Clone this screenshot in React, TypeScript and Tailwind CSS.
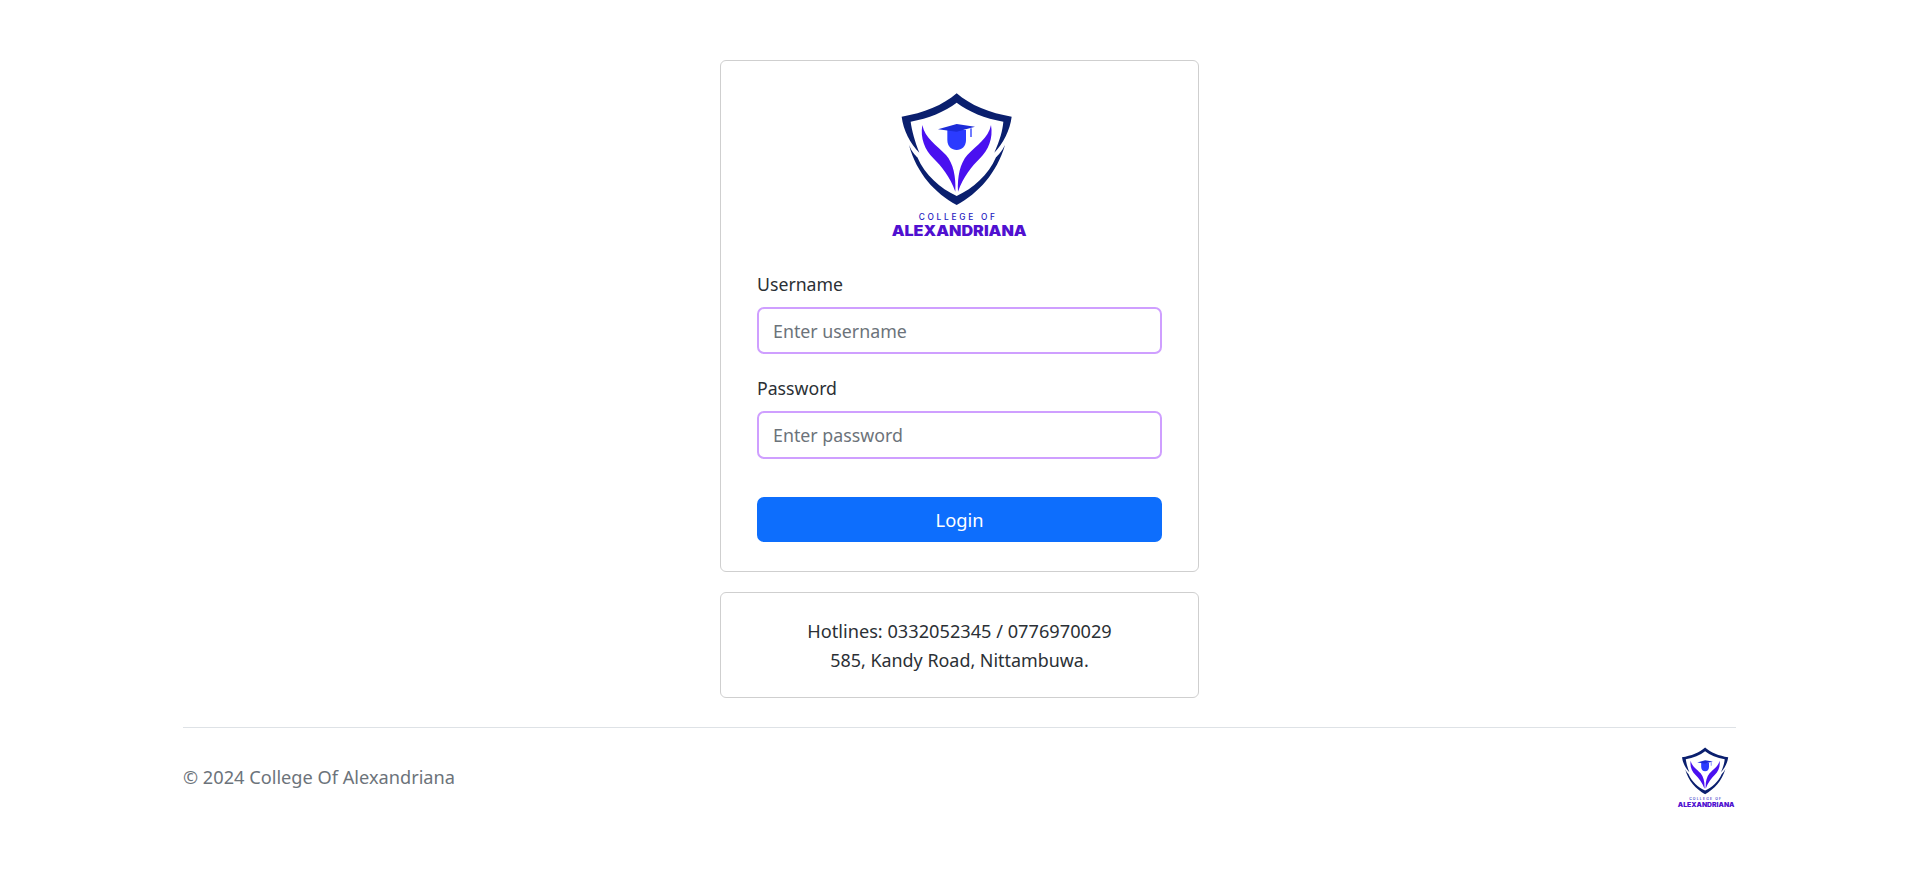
function Logo({ className }: { className: string }) {
  return (
    <svg viewBox="90 30 420 450" className={className}>
      {/* shield */}
      <path
        fill="#0a1f6e"
        d="M290 40C330 75 390 100 455 110C450 150 430 190 403 218C420 180 428 150 430 125C375 115 325 95 290 68C255 95 205 115 152 125C155 150 165 185 178 218C150 190 130 150 125 110C190 100 250 75 290 40Z"
      />
      <path
        fill="#0a1f6e"
        d="M147 195C170 280 225 340 290 375C355 340 410 280 435 195C425 215 415 225 408 232C385 285 340 325 290 348C240 325 195 285 172 232C165 225 155 215 147 195Z"
      />
      {/* wings */}
      <path
        fill="#4a10f0"
        d="M187 135C195 175 230 195 258 225C280 250 288 290 286 335C270 290 245 260 220 235C195 210 180 175 187 135Z"
      />
      <path
        fill="#4a10f0"
        d="M393 135C385 175 350 195 322 225C300 250 292 290 294 335C310 290 335 260 360 235C385 210 400 175 393 135Z"
      />
      {/* cap */}
      <path fill="#2b3bff" d="M262 150H318V180C318 200 305 210 290 210C275 210 262 200 262 180Z" />
      <path fill="#1c2bd8" d="M234 148L290 132L345 140L290 155Z" />
      <rect x="331" y="145" width="4" height="26" fill="#2b3bff" />
      <text
        x="176"
        y="419"
        fill="#2418c0"
        fontSize="25"
        fontWeight="500"
        textLength="229"
        fontFamily="Inter, sans-serif"
      >
        COLLEGE OF
      </text>
      <text
        x="95"
        y="468"
        fill="#5010d0"
        fontSize="42"
        fontWeight="900"
        textLength="405"
        lengthAdjust="spacingAndGlyphs"
        fontFamily="Inter, sans-serif"
      >
        ALEXANDRIANA
      </text>
    </svg>
  )
}

const fields = [
  { label: 'Username', placeholder: 'Enter username', type: 'text', height: 'h-[47px]' },
  { label: 'Password', placeholder: 'Enter password', type: 'password', height: 'h-[48px]' },
]

export default function App() {
  return (
    <div className="min-h-[871px] bg-white pl-[2px] font-['Noto_Sans',sans-serif] text-[18.2px] font-[380] text-[#2b3035]">
      <div className="flex flex-col items-center pt-[60px]">
        {/* Login card */}
        <div className="w-[479px] rounded-[6px] border border-[#cfcfcf] px-[36px] pt-[29px] pb-[29px]">
          <Logo className="mx-auto h-[150px] w-[140px]" />
          <form className="mt-[30px]">
            {fields.map(({ label, placeholder, type, height }) => (
              <div key={label} className="mb-[20px]">
                <label className="mb-[9px] block h-[28px] text-[17.7px] leading-[28px]">{label}</label>
                <input
                  type={type}
                  placeholder={placeholder}
                  className={`block ${height} w-full rounded-[7px] border-2 border-[#cf9fff] px-[14px] text-[17.8px] outline-none placeholder:text-[#6c737a]`}
                />
              </div>
            ))}
            <button
              type="button"
              className="mt-[38px] block h-[45px] w-full rounded-[7px] bg-[#0d6efd] text-[18.3px] text-white"
            >
              Login
            </button>
          </form>
        </div>

        {/* Contact card */}
        <div className="mt-[20px] w-[479px] rounded-[6px] border border-[#cfcfcf] pt-[24px] pb-[22px] text-center leading-[29px]">
          <p>Hotlines: 0332052345 / 0776970029</p>
          <p className="text-[17.9px]">585, Kandy Road, Nittambuwa.</p>
        </div>
      </div>

      {/* Footer */}
      <footer className="mx-auto mt-[29px] flex w-[1553px] items-center justify-between border-t border-[#dee2e6] pt-[18px]">
        <p className="text-[18.2px] text-[#6c737a]">© 2024 College Of Alexandriana</p>
        <Logo className="h-[63px] w-[59px]" />
      </footer>
    </div>
  )
}
